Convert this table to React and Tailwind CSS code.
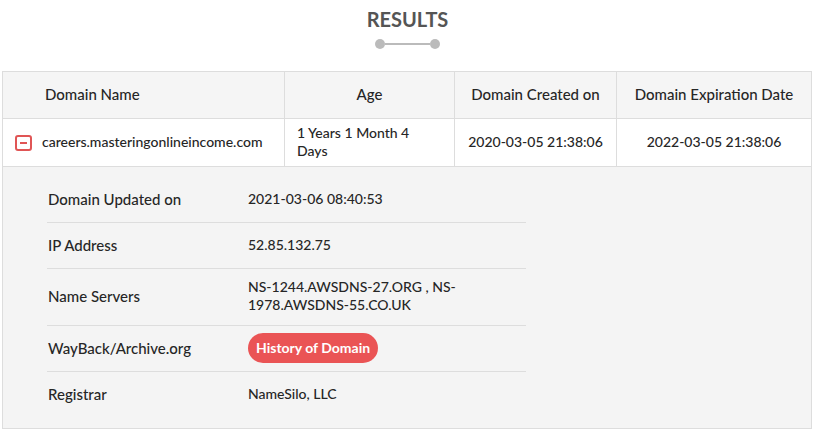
import React from 'react';

const font = { fontFamily: 'Lato, "Open Sans", sans-serif' };

const details = [
  { label: 'Domain Updated on', value: '2021-03-06 08:40:53' },
  { label: 'IP Address', value: '52.85.132.75' },
  {
    label: 'Name Servers',
    value: (
      <>
        NS-1244.AWSDNS-27.ORG , NS-
        <br />
        1978.AWSDNS-55.CO.UK
      </>
    ),
    tall: true,
  },
  {
    label: 'WayBack/Archive.org',
    value: (
      <span className="inline-flex h-[30px] items-center rounded-full bg-[#ea5455] px-[8px] text-[14px] font-bold text-white">
        History of Domain
      </span>
    ),
  },
  { label: 'Registrar', value: 'NameSilo, LLC', last: true },
];

function MinusBox() {
  return (
    <span className="flex h-[16px] w-[17px] shrink-0 items-center justify-center rounded-[3px] border-2 border-[#e05555]">
      <span className="h-[2px] w-[7px] bg-[#e05555]" />
    </span>
  );
}

export default function App() {
  return (
    <div className="h-[433px] w-[815px] overflow-hidden bg-white text-[#262626]" style={font}>
      {/* heading */}
      <div className="flex flex-col items-center pt-[8px]">
        <h2 className="text-[20px] font-bold leading-[22px] text-[#555]">RESULTS</h2>
        <div className="mt-[9px] flex items-center">
          <span className="h-[10px] w-[10px] rounded-full bg-[#bbb]" />
          <span className="h-[2px] w-[45px] bg-[#bbb]" />
          <span className="h-[10px] w-[10px] rounded-full bg-[#bbb]" />
        </div>
      </div>

      {/* table */}
      <div className="ml-[2px] mt-[22px] w-[810px] border border-[#ddd] font-medium">
        <div className="grid grid-cols-[282px_170px_162px_1fr] border-b border-[#ddd] bg-[#f5f5f5] text-[15px] leading-[18px]">
          <div className="flex h-[46px] items-center border-r border-[#ddd] pb-[2px] pl-[42px]">Domain Name</div>
          <div className="flex items-center justify-center border-r border-[#ddd] pb-[2px]">Age</div>
          <div className="flex items-center justify-center border-r border-[#ddd] pb-[2px]">Domain Created on</div>
          <div className="flex items-center justify-center pb-[2px]">Domain Expiration Date</div>
        </div>

        <div className="grid grid-cols-[282px_170px_162px_1fr] border-b border-[#ddd] bg-white text-[14px] leading-[18px]">
          <div className="flex h-[47px] items-center gap-[10px] border-r border-[#ddd] pl-[12px]">
            <MinusBox />
            <span className="pb-[1px]">careers.masteringonlineincome.com</span>
          </div>
          <div className="flex items-center border-r border-[#ddd] pb-[1px] pl-[12px]">
            <span>
              1 Years 1 Month 4
              <br />
              Days
            </span>
          </div>
          <div className="flex items-center justify-center border-r border-[#ddd] pb-[1px]">2020-03-05 21:38:06</div>
          <div className="flex items-center justify-center pb-[1px]">2022-03-05 21:38:06</div>
        </div>

        <div className="bg-[#f4f4f4] pb-[10px] pl-[44px] pt-[10px]">
          <div className="w-[479px]">
            {details.map((d) => (
              <div
                key={d.label}
                className={`flex items-center pb-[2px] ${d.tall ? 'h-[57px]' : 'h-[46px]'} ${d.last ? '' : 'border-b border-[#ddd]'}`}
              >
                <div className="w-[201px] pl-px text-[15px] leading-[18px]">{d.label}</div>
                <div className="text-[14px] leading-[18px]">{d.value}</div>
              </div>
            ))}
          </div>
        </div>
      </div>
    </div>
  );
}
